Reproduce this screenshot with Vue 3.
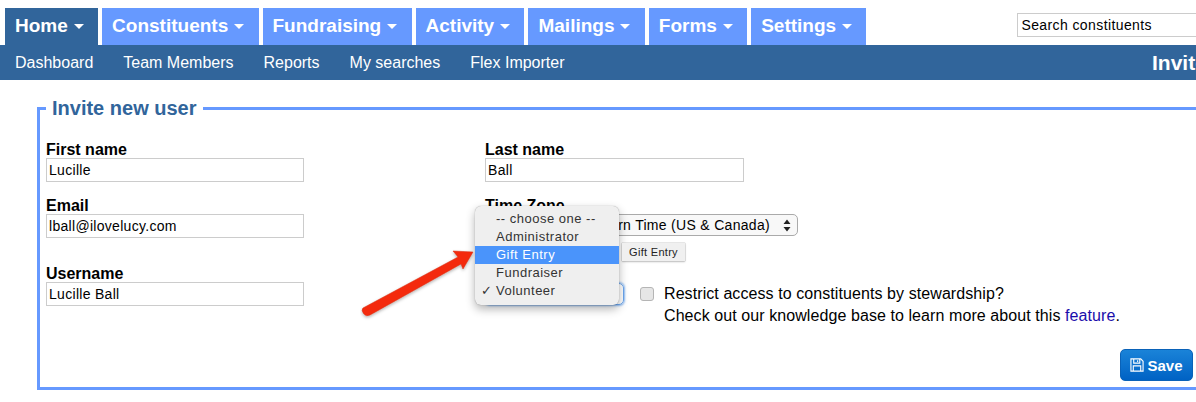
<script setup>
const tabs = ["Home", "Constituents", "Fundraising", "Activity", "Mailings", "Forms", "Settings"];
const subLinks = ["Dashboard", "Team Members", "Reports", "My searches", "Flex Importer"];
const roles = ["-- choose one --", "Administrator", "Gift Entry", "Fundraiser", "Volunteer"];
</script>

<template>
  <div class="page">
    <div class="tab-row">
      <a v-for="(tab, i) in tabs" :key="tab" class="tab" :class="{ active: i === 0 }">
        {{ tab }}<span class="caret"></span>
      </a>
      <input class="search" value="Search constituents" />
    </div>
    <div class="sub-row">
      <a v-for="link in subLinks" :key="link" class="sub-link">{{ link }}</a>
      <span class="sub-title">Invite new user</span>
    </div>

    <fieldset class="box">
      <legend>Invite new user</legend>
      <div class="cols">
        <div class="col-left">
          <label class="field first">
            <span>First name</span>
            <input value="Lucille" />
          </label>
          <label class="field email">
            <span>Email</span>
            <input value="lball@ilovelucy.com" />
          </label>
          <label class="field user">
            <span>Username</span>
            <input value="Lucille Ball" />
          </label>
        </div>
        <div class="col-right">
          <label class="field first">
            <span>Last name</span>
            <input class="wide" value="Ball" />
          </label>
          <div class="field email">
            <span>Time Zone</span>
            <div class="fake-select">
              (GMT-05:00) Eastern Time (US &amp; Canada)
              <svg width="8" height="13" viewBox="0 0 8 13"><path d="M4 0.5 7.5 5H.5zM4 12.5.5 8h7z" fill="#222" /></svg>
            </div>
          </div>
          <div class="role-row">
            <div class="role-select"></div>
            <div class="restrict">
              <span class="check"></span>
              <div>
                <div>Restrict access to constituents by stewardship?</div>
                <div>Check out our knowledge base to learn more about this <a class="link">feature</a>.</div>
              </div>
            </div>
          </div>
          <ul class="menu">
            <li v-for="(role, i) in roles" :key="role" :class="{ hot: i === 2 }">
              <span v-if="i === 4" class="tick">✓</span>{{ role }}
            </li>
          </ul>
          <div class="tip">Gift Entry</div>
        </div>
      </div>
      <div class="actions">
        <button class="save">
          <svg width="14" height="14" viewBox="0 0 15 15" fill="none" stroke="#fff" stroke-width="1.2">
            <path d="M1 1h10.5L14 3.5V14H1z" />
            <path d="M4 1v4.5h6.5V1M8.2 2.3v2M3.5 14V8.5h8V14" />
          </svg>
          Save
        </button>
      </div>
    </fieldset>

    <svg class="arrow" width="130" height="80" viewBox="0 0 130 80">
      <defs>
        <filter id="arrow-shadow" x="-20%" y="-20%" width="140%" height="150%">
          <feDropShadow dx="0" dy="1.5" stdDeviation="1.5" flood-color="#000" flood-opacity="0.3" />
        </filter>
      </defs>
      <path d="M3 61 L98 10 L93 4 L113 5 L103 22 L101 17 L10 68 Q6 70 3.5 66.5 Q1 63 3 61Z" fill="#f42c08" stroke="#d42a10" stroke-width="0.5" stroke-linejoin="round" filter="url(#arrow-shadow)" />
    </svg>
  </div>
</template>

<style scoped>
.page {
  position: relative;
  width: 1196px;
  height: 402px;
  overflow: hidden;
  font-family: "Liberation Sans", Arial, sans-serif;
  color: #000;
}

.tab-row {
  display: flex;
  align-items: flex-start;
  gap: 4px;
  padding: 8px 0 0 5px;
  height: 37px;
}
.tab {
  display: flex;
  align-items: center;
  height: 37px;
  box-sizing: border-box;
  padding: 0 14.3px 2px 10px;
  background: #6699ff;
  color: #fff;
  font-size: 19px;
  font-weight: bold;
  flex-shrink: 0;
}
.tab.active {
  background: #31659b;
}
.caret {
  width: 0;
  height: 0;
  margin-left: 6px;
  margin-top: 2px;
  border-left: 5px solid transparent;
  border-right: 5px solid transparent;
  border-top: 5px solid #fff;
}
.search {
  flex-shrink: 0;
  margin-left: 147px;
  margin-top: 5px;
  width: 200px;
  height: 24px;
  box-sizing: border-box;
  border: 1px solid #ccc;
  padding: 0 3px;
  font: 14px "Liberation Sans", Arial, sans-serif;
  letter-spacing: 0.4px;
  color: #000;
}

.sub-row {
  display: flex;
  align-items: center;
  height: 35px;
  background: #31659b;
  padding-left: 15px;
  overflow: hidden;
  white-space: nowrap;
}
.sub-link {
  color: #fff;
  font-size: 16px;
  margin-right: 30px;
}
.sub-title {
  position: absolute;
  left: 1152px;
  color: #fff;
  font-size: 21px;
  font-weight: bold;
}

.box {
  box-sizing: border-box;
  width: 1213px;
  height: 293px;
  margin: 17px 0 0 37px;
  padding: 0 54px 0 6px;
  border: 3px solid #6699ff;
  min-inline-size: 0;
}
.box legend {
  margin-left: 0;
  padding: 0 6px;
  color: #31659b;
  font-size: 20px;
  font-weight: bold;
  line-height: 22px;
}

.cols {
  display: flex;
  height: 223px;
}
.col-left {
  width: 439px;
  flex-shrink: 0;
}
.col-right {
  position: relative;
  flex: 1;
}

.field {
  display: block;
}
.field > span {
  display: block;
  font-size: 16px;
  font-weight: bold;
  line-height: 17px;
}
.field input {
  display: block;
  width: 258px;
  height: 24px;
  box-sizing: border-box;
  border: 1px solid #ccc;
  padding: 0 2px;
  font: 14px "Liberation Sans", Arial, sans-serif;
  letter-spacing: 0.3px;
  color: #000;
}
.field input.wide {
  width: 259px;
}
.field.first {
  margin-top: 22px;
}
.field.email {
  margin-top: 15px;
}
.field.user {
  margin-top: 27px;
}

.fake-select {
  display: flex;
  align-items: center;
  justify-content: space-between;
  width: 313px;
  height: 22px;
  box-sizing: border-box;
  border: 1px solid #aaa;
  border-radius: 5px;
  background: #f8f8f8;
  padding: 0 6px 0 8px;
  font-size: 14px;
  letter-spacing: 0.3px;
}

.role-row {
  display: flex;
  margin-top: 47px;
}
.role-select {
  width: 139px;
  height: 22px;
  box-sizing: border-box;
  border: 1px solid #6aa5ee;
  box-shadow: 0 0 2px 1px #8fbdf5;
  border-radius: 5px;
}
.restrict {
  display: flex;
  margin-left: 16px;
  font-size: 16px;
  line-height: 22px;
  letter-spacing: 0.08px;
}
.check {
  width: 14px;
  height: 14px;
  box-sizing: border-box;
  margin: 4px 10px 0 0;
  border: 1px solid #b5b5b5;
  border-radius: 3px;
  background: #e6e6e6;
}
.link {
  color: #1a0dab;
}

.menu {
  position: absolute;
  left: -10px;
  top: 87px;
  width: 144px;
  height: 99px;
  box-sizing: border-box;
  margin: 0;
  padding: 4px 0;
  list-style: none;
  background: #efefef;
  border-radius: 6px;
  box-shadow: 0 0 1px rgba(0, 0, 0, 0.4), 0 4px 10px rgba(0, 0, 0, 0.3);
  font-size: 13px;
  letter-spacing: 0.5px;
  color: #333;
}
.menu li {
  position: relative;
  height: 18px;
  line-height: 18px;
  padding-left: 21px;
}
.menu li.hot {
  background: #4a94fb;
  color: #fff;
}
.tick {
  position: absolute;
  left: 6px;
}
.tip {
  position: absolute;
  left: 137px;
  top: 124px;
  width: 63px;
  height: 18px;
  box-sizing: border-box;
  text-align: center;
  background: #f0f0f0;
  box-shadow: 0 0 1px rgba(0, 0, 0, 0.5), 0 1px 2px rgba(0, 0, 0, 0.2);
  font-size: 11px;
  line-height: 18px;
  letter-spacing: 0.3px;
  color: #222;
}

.actions {
  display: flex;
  justify-content: flex-end;
  margin-top: 7px;
}
.save {
  display: flex;
  align-items: center;
  justify-content: center;
  gap: 3px;
  width: 73px;
  height: 32px;
  border: 1px solid #0a62b8;
  border-radius: 5px;
  background: linear-gradient(#1a83d8, #0062c4);
  color: #fff;
  font: bold 15px "Liberation Sans", Arial, sans-serif;
  padding: 0;
}

.arrow {
  position: absolute;
  left: 360px;
  top: 247px;
}
</style>

<style>
html, body {
  margin: 0;
  overflow: hidden;
  background: #fff;
}
</style>
